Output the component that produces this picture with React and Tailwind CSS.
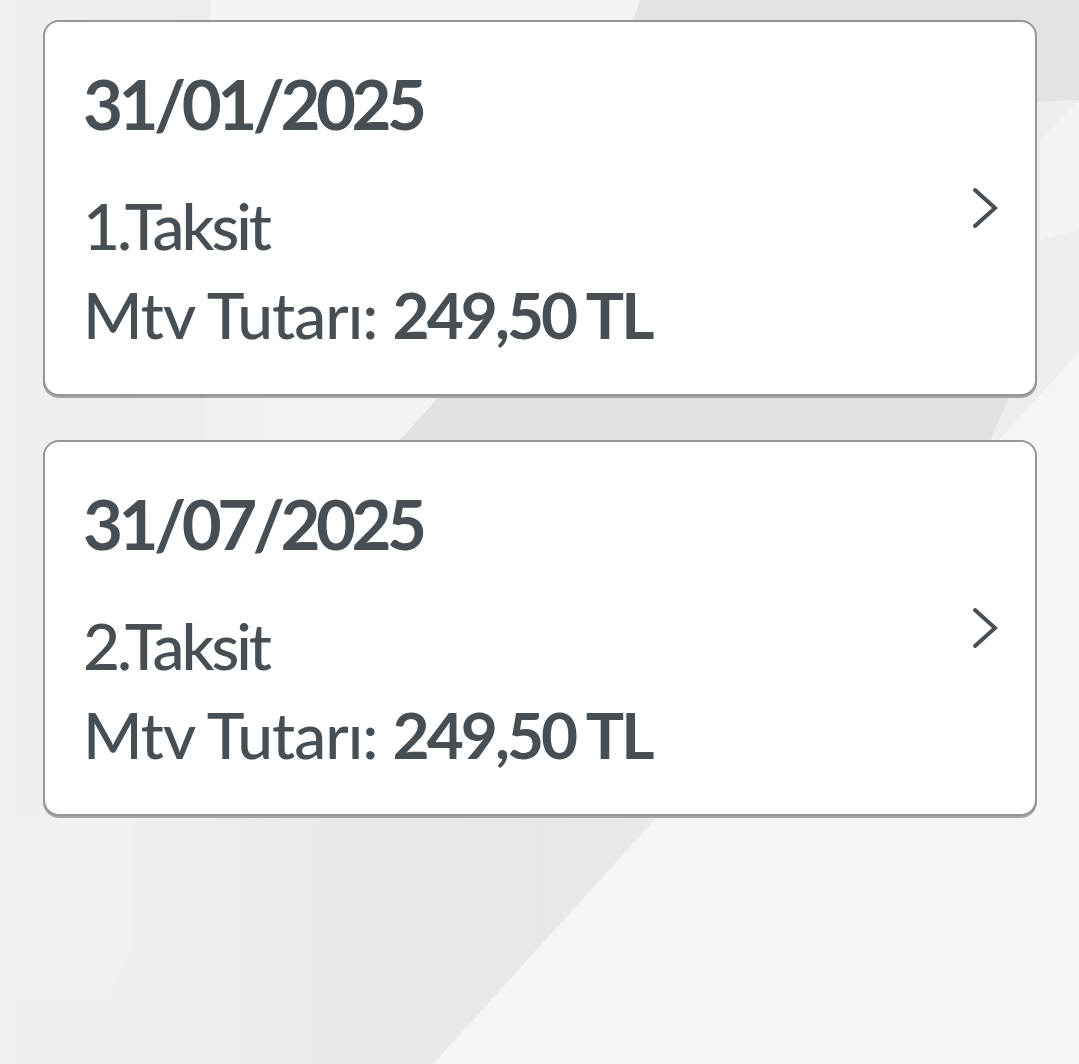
const installments = [
  { id: 1, date: "31/01/2025", label: "1.Taksit", amount: "249,50 TL" },
  { id: 2, date: "31/07/2025", label: "2.Taksit", amount: "249,50 TL" },
];

// soft angled panels behind the list
const Backdrop = () => (
  <svg
    className="absolute inset-0 h-full w-full"
    viewBox="0 0 1079 1064"
    preserveAspectRatio="none"
  >
    <defs>
      <linearGradient id="base" x1="0" y1="0" x2="1" y2="0">
        <stop offset="0" stopColor="#eef0f2" />
        <stop offset="0.5" stopColor="#e5e8eb" />
        <stop offset="1" stopColor="#eceef0" />
      </linearGradient>
    </defs>
    <rect width="1079" height="1064" fill="url(#base)" />
    <polygon points="210,0 640,0 600,120 210,120" fill="#f3f4f6" />
    <polygon points="640,0 1079,0 1079,100 600,120" fill="#e1e3e6" />
    <polygon points="1079,100 1079,230 1040,240 1040,140" fill="#f3f4f6" />
    <polygon points="205,396 265,396 265,440 205,440" fill="#f0f1f3" />
    <polygon points="265,396 440,396 400,440 265,440" fill="#f2f3f5" />
    <polygon points="440,396 1010,396 990,440 400,440" fill="#dfe1e4" />
    <polygon points="433,1064 1079,1064 1079,352" fill="#f4f5f7" />
    <polygon points="0,817 135,817 135,940 110,1000 0,1000" fill="#f0f1f3" />
  </svg>
);

const Chevron = () => (
  <svg width="28" height="44" viewBox="0 0 28 44" fill="none" className="shrink-0">
    <polyline
      points="4,4 24,22 4,40"
      stroke="#474f55"
      strokeWidth="4"
      strokeLinecap="round"
      strokeLinejoin="miter"
    />
  </svg>
);

const InstallmentCard = ({ item }) => (
  <div className="flex h-[376px] items-center justify-between rounded-[16px] border-2 border-[#949699] bg-white pl-[38px] pr-[36px] shadow-[0_2px_0_#a3a5a8]">
    <div className="flex flex-col text-[#474f55]">
      <span className="text-[69px] font-bold leading-none tracking-[-4.5px]">
        {item.date}
      </span>
      <span className="mt-[56px] text-[64px] font-medium leading-none tracking-[-3px]">
        {item.label}
      </span>
      <span className="mt-[25px] text-[64px] font-medium leading-none tracking-[-1px]">
        Mtv Tutarı:{" "}
        <span className="font-bold tracking-[-3px]">{item.amount}</span>
      </span>
    </div>
    <Chevron />
  </div>
);

export default function App() {
  return (
    <div
      className="relative min-h-[1064px] w-full overflow-hidden"
      style={{ fontFamily: "Lato, 'Noto Sans', sans-serif" }}
    >
      <Backdrop />
      <div className="relative flex flex-col gap-[44px] pl-[43px] pr-[42px] pt-[20px]">
        {installments.map((item) => (
          <InstallmentCard key={item.id} item={item} />
        ))}
      </div>
    </div>
  );
}
